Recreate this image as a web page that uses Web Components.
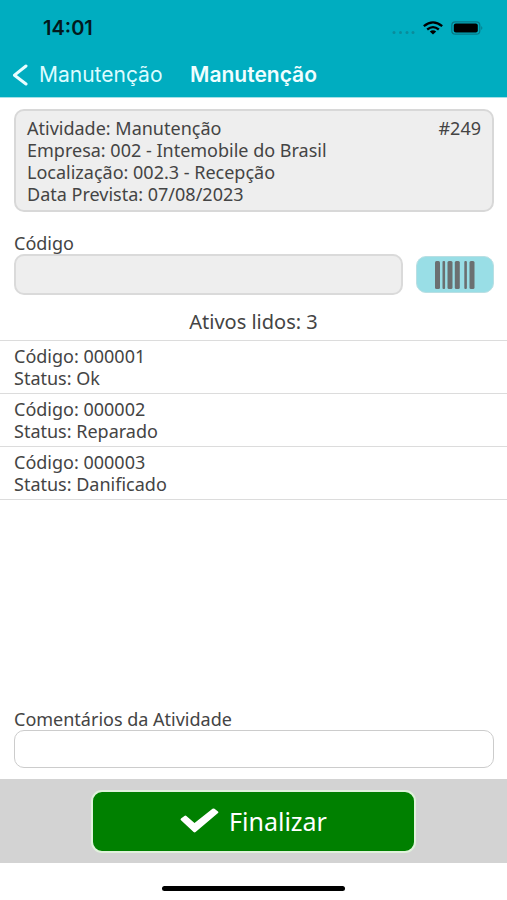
<!DOCTYPE html>
<html lang="pt-BR">
<head>
<meta charset="utf-8">
<meta name="viewport" content="width=device-width, initial-scale=1">
<title>Manutenção</title>
<style>
  body { margin: 0; background: #fff; color: #444; font: 18px/22px "Noto Sans", "Open Sans", sans-serif; }
</style>
</head>
<body>
<maintenance-screen></maintenance-screen>
<script>
const define = (name, html, setup) => customElements.define(name, class extends HTMLElement {
  connectedCallback() {
    if (this.shadowRoot) return;
    const root = this.attachShadow({ mode: 'open' });
    const template = document.createElement('template');
    template.innerHTML = html;
    root.append(template.content.cloneNode(true));
    if (setup) setup(root, this);
  }
});

define('status-bar', `
<style>
  :host { display: flex; align-items: center; justify-content: space-between; height: 55px; padding: 0 23px 0 43px; box-sizing: border-box; color: #03191c; font: 600 20px/22px Inter, sans-serif; }
  .icons { display: flex; align-items: center; gap: 8px; }
  svg { display: block; }
</style>
<time>14:01</time>
<div class="icons">
  <svg width="23" height="14" viewBox="0 0 23 14" fill="#0a8c9b" aria-hidden="true"><circle cx="2" cy="11.500" r="1.500"/><circle cx="8.500" cy="11.500" r="1.500"/><circle cx="15" cy="11.500" r="1.500"/><circle cx="21" cy="11.500" r="1.500"/></svg>
  <svg width="20" height="14" viewBox="0 0 20 14" fill="none" stroke="#000" stroke-width="2.300" aria-label="Wi-Fi"><path d="M.8 5.200Q10-2.400 19.200 5.200M4.200 8.500Q10 3.800 15.800 8.500"/><path d="M6.800 10.400Q10 8 13.200 10.400L10 13.400Z" fill="#000" stroke="none"/></svg>
  <svg width="33" height="14" viewBox="0 0 33 14" aria-label="Bateria"><rect x=".8" y=".8" width="28" height="12.400" rx="3.500" fill="none" stroke="#087886" stroke-width="1.200"/><rect x="2.800" y="2.600" width="24" height="8.800" rx="2" fill="#000"/><path d="M30.300 5q2 2 0 4z" fill="#087886"/></svg>
</div>`);

define('nav-bar', `
<style>
  :host { display: grid; grid-template-columns: 1fr auto 1fr; align-items: center; height: 42px; padding: 0 12px 3px; box-sizing: border-box; color: #fff; font: 21px/24px Inter, sans-serif; }
  a { display: flex; align-items: center; gap: 11px; color: #dcfcff; text-decoration: none; }
  h1 { margin: 0; font-size: 21px; font-weight: 600; color: #f0feff; }
  svg { display: block; }
</style>
<a href="#voltar"><svg width="16" height="22" viewBox="0 0 16 22" fill="none" stroke="#e8fdff" stroke-width="3" stroke-linecap="round" stroke-linejoin="round" aria-hidden="true"><path d="M14 2 2.500 11.200 14 20"/></svg><slot name="back"></slot></a>
<h1><slot></slot></h1>`);

define('info-card', `
<style>
  :host { display: flex; justify-content: space-between; gap: 12px; padding: 6px 11px 5px; border: 2px solid #d8d8d8; border-radius: 10px; background: #eee; }
</style>
<div><slot></slot></div><div><slot name="number"></slot></div>`);

define('text-field', `
<style>
  :host { display: block; flex: 1; min-width: 0; }
  label { display: block; }
  input { display: block; width: 100%; height: 38px; box-sizing: border-box; margin: 0; padding: 0 10px; border: 1px solid #ccc; border-radius: 10px; background: #fff; color: inherit; font: inherit; outline: 0; }
  :host([filled]) input { height: 41px; border: 2px solid #dadada; background: #eee; }
</style>
<label for="field"></label><input id="field" type="text">`, (root, host) => {
  root.querySelector('label').textContent = host.getAttribute('label');
});

define('scan-button', `
<style>
  :host { display: block; }
  button { display: grid; place-items: center; width: 78px; height: 37px; padding: 0; border: 1px solid #b9dfe3; border-radius: 10px; background: #99dee6; }
</style>
<button type="button" aria-label="Ler código de barras"><svg width="40" height="28" viewBox="0 0 40 28" fill="#6b7071" aria-hidden="true"><rect width="5" height="28" rx="1.500"/><rect x="7.500" width="2.600" height="28" rx="1"/><rect x="12.500" width="5" height="28" rx="1.500"/><rect x="19.800" width="5" height="28" rx="1.500"/><rect x="29.300" width="2.600" height="28" rx="1"/><rect x="34.500" width="5" height="28" rx="1.500"/></svg></button>`);

define('asset-item', `
<style>
  :host { display: block; padding: 4px 14px; border-bottom: 1px solid #dcdcdc; }
</style>
<div>Código: <slot name="code"></slot></div><div>Status: <slot></slot></div>`);

define('asset-list', `
<style>
  :host { display: block; }
  h2 { margin: 0; padding: 7px 0 6px; border-bottom: 1px solid #dcdcdc; text-align: center; font-size: 20px; line-height: 24px; font-weight: 400; }
</style>
<h2><slot name="heading"></slot></h2><slot></slot>`);

define('action-bar', `
<style>
  :host { display: flex; justify-content: center; padding: 11px 0 10px; background: #d3d3d3; }
  button { display: flex; align-items: center; justify-content: center; gap: 10px; width: 64%; height: 63px; padding: 0 0 2px; border: 2px solid #e0f2dc; border-radius: 11px; background: #008000; color: #fff; font: 25px/30px "Noto Sans", "Open Sans", sans-serif; }
</style>
<button type="button"><svg width="39" height="25" viewBox="0 0 39 25" aria-hidden="true"><path d="M1 10.500 4.400 8q1-.8 2 0L14.500 15 32.500.8q1-.8 2 0L38 3.500q1 .8 0 1.600L15.600 24q-1 .8-2 0L1 12.300q-1-.9 0-1.800Z" fill="#fff"/></svg><slot></slot></button>`);

define('maintenance-screen', `
<style>
  :host { display: flex; flex-direction: column; min-height: 100vh; }
  header { background: #00adc0; border-bottom: 1px solid #a5e0e7; }
  main { flex: 1; display: flex; flex-direction: column; }
  info-card { margin: 11px 13px 20px 14px; }
  .scan { display: flex; align-items: flex-end; gap: 13px; padding: 0 13px 0 14px; }
  scan-button { padding-bottom: 2px; }
  asset-list { margin-top: 8px; }
  .comments { margin: auto 13px 11px 14px; flex: none; }
  .home { display: flex; justify-content: center; padding: 23px 0 9px; }
  .home span { width: 36%; height: 5px; border-radius: 3px; background: #000; }
</style>
<header>
  <status-bar></status-bar>
  <nav-bar><span slot="back">Manutenção</span>Manutenção</nav-bar>
</header>
<main>
  <info-card>
    <div>Atividade: Manutenção</div>
    <div>Empresa: 002 - Intemobile do Brasil</div>
    <div>Localização: 002.3 - Recepção</div>
    <div>Data Prevista: 07/08/2023</div>
    <span slot="number">#249</span>
  </info-card>
  <div class="scan"><text-field label="Código" filled></text-field><scan-button></scan-button></div>
  <asset-list>
    <span slot="heading">Ativos lidos: 3</span>
    <asset-item><span slot="code">000001</span>Ok</asset-item>
    <asset-item><span slot="code">000002</span>Reparado</asset-item>
    <asset-item><span slot="code">000003</span>Danificado</asset-item>
  </asset-list>
  <text-field class="comments" label="Comentários da Atividade"></text-field>
</main>
<action-bar>Finalizar</action-bar>
<div class="home"><span></span></div>`);
</script>
</body>
</html>
